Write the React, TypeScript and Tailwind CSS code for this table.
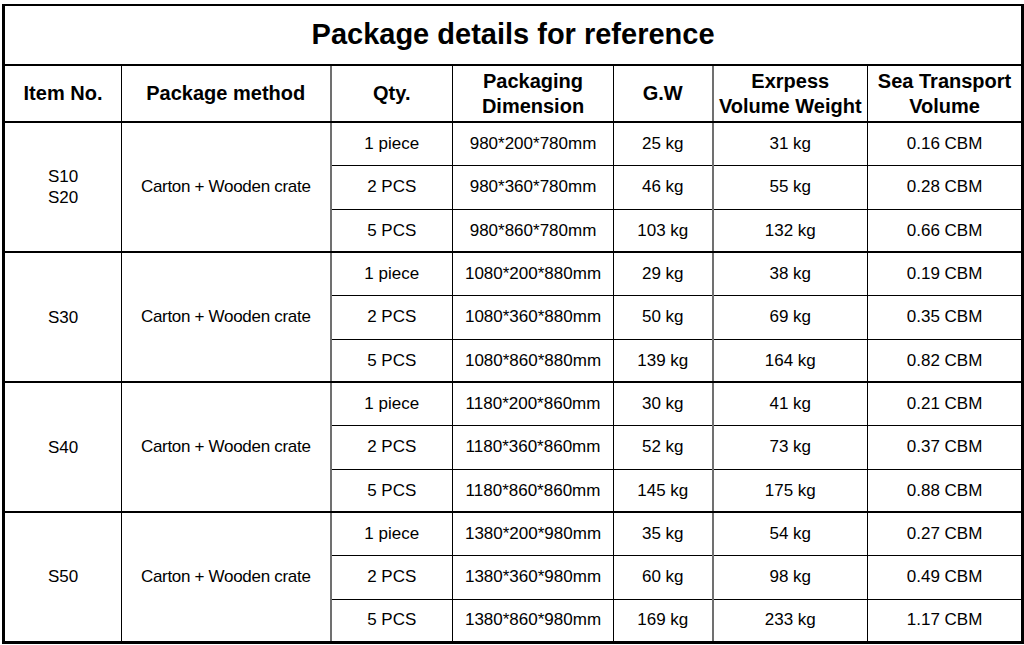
const GROUPS = [
  {
    item: ["S10", "S20"],
    rows: [
      ["1 piece", "980*200*780mm", "25 kg", "31 kg", "0.16 CBM"],
      ["2 PCS", "980*360*780mm", "46 kg", "55 kg", "0.28 CBM"],
      ["5 PCS", "980*860*780mm", "103 kg", "132 kg", "0.66 CBM"],
    ],
  },
  {
    item: ["S30"],
    rows: [
      ["1 piece", "1080*200*880mm", "29 kg", "38 kg", "0.19 CBM"],
      ["2 PCS", "1080*360*880mm", "50 kg", "69 kg", "0.35 CBM"],
      ["5 PCS", "1080*860*880mm", "139 kg", "164 kg", "0.82 CBM"],
    ],
  },
  {
    item: ["S40"],
    rows: [
      ["1 piece", "1180*200*860mm", "30 kg", "41 kg", "0.21 CBM"],
      ["2 PCS", "1180*360*860mm", "52 kg", "73 kg", "0.37 CBM"],
      ["5 PCS", "1180*860*860mm", "145 kg", "175 kg", "0.88 CBM"],
    ],
  },
  {
    item: ["S50"],
    rows: [
      ["1 piece", "1380*200*980mm", "35 kg", "54 kg", "0.27 CBM"],
      ["2 PCS", "1380*360*980mm", "60 kg", "98 kg", "0.49 CBM"],
      ["5 PCS", "1380*860*980mm", "169 kg", "233 kg", "0.88 CBM"],
    ],
  },
];

// last value of last group is 1.17 CBM
GROUPS[3].rows[2][4] = "1.17 CBM";

const ROW_H = ["h-[43px]", "h-[44px]", "h-[43px]"];

function HeadCell({ children, className = "" }: { children: React.ReactNode; className?: string }) {
  return (
    <th
      className={`border border-b-2 border-black px-1 text-center align-middle text-[20px] font-bold leading-[25px] ${className}`}
    >
      {children}
    </th>
  );
}

export default function App() {
  return (
    <div className="h-[645px] w-[1024px] overflow-hidden bg-white pl-[2px] pt-[4px] font-['Liberation_Sans',Arial,sans-serif] text-black">
      <table className="w-[1021px] table-fixed border-collapse border-x-[3px] border-t-2 border-b-[3px] border-black">
        <colgroup>
          <col className="w-[118px]" />
          <col className="w-[209px]" />
          <col className="w-[122px]" />
          <col className="w-[161px]" />
          <col className="w-[99px]" />
          <col className="w-[155px]" />
          <col className="w-[155px]" />
        </colgroup>
        <thead>
          <tr className="h-[60px]">
            <th
              colSpan={7}
              className="border-b-2 border-black text-center align-middle text-[29px] font-bold"
            >
              Package details for reference
            </th>
          </tr>
          <tr className="h-[57px]">
            <HeadCell>Item No.</HeadCell>
            <HeadCell className="border-r-2 border-r-[#707070]">Package method</HeadCell>
            <HeadCell>Qty.</HeadCell>
            <HeadCell>
              Packaging
              <br />
              Dimension
            </HeadCell>
            <HeadCell className="border-r-2 border-r-[#707070]">G.W</HeadCell>
            <HeadCell>
              Exrpess
              <br />
              Volume Weight
            </HeadCell>
            <HeadCell>
              Sea Transport
              <br />
              Volume
            </HeadCell>
          </tr>
        </thead>
        <tbody className="text-[17px]">
          {GROUPS.map((group, gi) =>
            group.rows.map((row, ri) => {
              const last = ri === 2 && gi < GROUPS.length - 1;
              const bottom = last ? "border-b-2" : "";
              return (
                <tr key={`${gi}-${ri}`} className={ROW_H[ri]}>
                  {ri === 0 && (
                    <>
                      <td
                        rowSpan={3}
                        className={`border border-black text-center align-middle leading-[21px] ${gi < GROUPS.length - 1 ? "border-b-2" : ""}`}
                      >
                        {group.item.map((s) => (
                          <div key={s}>{s}</div>
                        ))}
                      </td>
                      <td
                        rowSpan={3}
                        className={`border border-r-2 border-black border-r-[#707070] text-center align-middle tracking-[-0.3px] ${gi < GROUPS.length - 1 ? "border-b-2" : ""}`}
                      >
                        Carton + Wooden crate
                      </td>
                    </>
                  )}
                  <td className={`border border-black text-center align-middle ${bottom}`}>{row[0]}</td>
                  <td className={`border border-black text-center align-middle ${bottom}`}>{row[1]}</td>
                  <td className={`border border-r-2 border-black border-r-[#707070] text-center align-middle ${bottom}`}>
                    {row[2]}
                  </td>
                  <td className={`border border-black text-center align-middle ${bottom}`}>{row[3]}</td>
                  <td className={`border border-black text-center align-middle ${bottom}`}>{row[4]}</td>
                </tr>
              );
            })
          )}
        </tbody>
      </table>
    </div>
  );
}
